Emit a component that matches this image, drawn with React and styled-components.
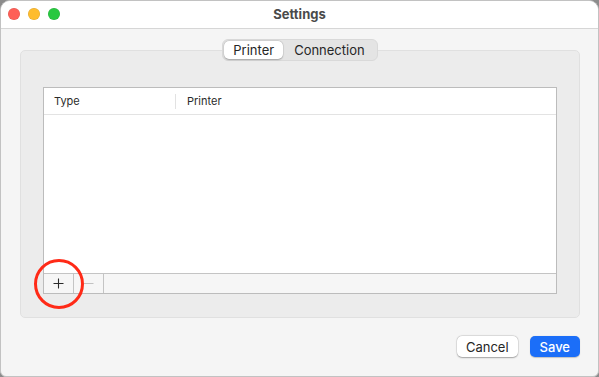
import React from "react";
import styled, { createGlobalStyle } from "styled-components";

const GlobalStyle = createGlobalStyle`
  * { box-sizing: border-box; }
  html, body {
    margin: 0;
    padding: 0;
    background: #8c8c8c;
    font-family: Inter, "Liberation Sans", sans-serif;
    -webkit-font-smoothing: antialiased;
  }
`;

const Window = styled.div`
  width: 599px;
  height: 377px;
  background: #f5f5f5;
  border: 1px solid #c2c2c2;
  border-radius: 10px 10px 6px 6px;
  overflow: hidden;
  display: flex;
  flex-direction: column;
  position: relative;
`;

const TitleBar = styled.div`
  height: 28px;
  flex: none;
  background: #ffffff;
  border-bottom: 1px solid #d6d6d6;
  display: flex;
  align-items: center;
  position: relative;
`;

const Lights = styled.div`
  display: flex;
  gap: 8px;
  padding-left: 7px;
  padding-bottom: 1px;
`;

const Light = styled.span`
  width: 12px;
  height: 12px;
  border-radius: 50%;
  background: ${(p) => p.$color};
  box-shadow: inset 0 0 0 0.5px rgba(0, 0, 0, 0.12);
`;

const Title = styled.div`
  position: absolute;
  left: 0;
  right: 0;
  top: 0;
  bottom: 1px;
  display: flex;
  align-items: center;
  justify-content: center;
  font-size: 13px;
  font-weight: 700;
  color: #4a4a4a;
  pointer-events: none;
`;

const Body = styled.div`
  flex: 1;
  display: flex;
  flex-direction: column;
  padding: 21px 18px 19px 19px;
`;

const Group = styled.div`
  height: 268px;
  background: #ececec;
  border: 1px solid #e0e0e0;
  border-radius: 5px;
  display: flex;
  flex-direction: column;
  align-items: center;
  padding: 0 22px;
`;

const Tabs = styled.div`
  margin-top: -12px;
  height: 22px;
  display: flex;
  padding: 1px;
  background: #e4e4e4;
  border: 1px solid #d9d9d9;
  border-radius: 6px;
`;

const Tab = styled.div`
  height: 100%;
  padding: 0 ${(p) => (p.$active ? "9px" : "11px")};
  display: flex;
  align-items: center;
  font-size: 13px;
  color: #262626;
  border-radius: 5px;
  background: ${(p) => (p.$active ? "#ffffff" : "transparent")};
  box-shadow: ${(p) =>
    p.$active ? "0 0.5px 1.5px rgba(0,0,0,0.25), 0 0 0 0.5px rgba(0,0,0,0.08)" : "none"};
`;

const Table = styled.div`
  margin-top: 26px;
  align-self: stretch;
  height: 207px;
  background: #ffffff;
  border: 1px solid #bcbcbc;
  display: flex;
  flex-direction: column;
`;

const Header = styled.div`
  height: 27px;
  flex: none;
  border-bottom: 1px solid #e3e3e3;
  display: flex;
  align-items: center;
`;

const HeaderCell = styled.div`
  width: ${(p) => p.$width || "auto"};
  flex: ${(p) => (p.$width ? "none" : "1")};
  height: 15px;
  display: flex;
  align-items: center;
  font-size: 11px;
  color: #2b2b2b;
  border-left: ${(p) => (p.$first ? "none" : "1px solid #e2e2e2")};
  padding-left: ${(p) => (p.$first ? "10px" : "11px")};
`;

const Rows = styled.div`
  flex: 1;
`;

const BottomBar = styled.div`
  height: 20px;
  flex: none;
  background: #f6f6f6;
  border-top: 1px solid #c4c4c4;
  display: flex;
`;

const BarButton = styled.div`
  width: 30px;
  height: 100%;
  border-right: 1px solid #c4c4c4;
  display: flex;
  align-items: center;
  justify-content: center;
  color: ${(p) => (p.$disabled ? "#c2c2c2" : "#2a2a2a")};
`;

const Footer = styled.div`
  margin-top: auto;
  display: flex;
  justify-content: flex-end;
  gap: 12px;
`;

const Button = styled.button`
  height: 21px;
  padding: 0 ${(p) => (p.$primary ? "10px" : "9px")};
  font-family: inherit;
  font-size: 13px;
  font-weight: ${(p) => (p.$primary ? 500 : 400)};
  color: ${(p) => (p.$primary ? "#ffffff" : "#262626")};
  background: ${(p) => (p.$primary ? "#1b6ef8" : "#ffffff")};
  border: none;
  border-radius: 5px;
  box-shadow: ${(p) =>
    p.$primary
      ? "0 0.5px 1px rgba(0,0,0,0.2)"
      : "0 0.5px 1.5px rgba(0,0,0,0.3), 0 0 0 0.5px rgba(0,0,0,0.1)"};
`;

const Marker = styled.div`
  position: absolute;
  left: 33px;
  top: 258px;
  width: 50px;
  height: 50px;
  border: 3px solid #ff2a17;
  border-radius: 50%;
  pointer-events: none;
`;

const Plus = () => (
  <svg width="11" height="11" viewBox="0 0 11 11">
    <path d="M5.5 0.5v10M0.5 5.5h10" stroke="currentColor" strokeWidth="1.1" />
  </svg>
);

const Minus = () => (
  <svg width="11" height="11" viewBox="0 0 11 11">
    <path d="M0.5 5.5h10" stroke="currentColor" strokeWidth="1" />
  </svg>
);

export default function App() {
  return (
    <>
      <GlobalStyle />
      <Window>
        <TitleBar>
          <Lights>
            <Light $color="#fe5f57" />
            <Light $color="#febc2e" />
            <Light $color="#28c840" />
          </Lights>
          <Title>Settings</Title>
        </TitleBar>
        <Body>
          <Group>
            <Tabs>
              <Tab $active>Printer</Tab>
              <Tab>Connection</Tab>
            </Tabs>
            <Table>
              <Header>
                <HeaderCell $first $width="131px">Type</HeaderCell>
                <HeaderCell>Printer</HeaderCell>
              </Header>
              <Rows />
              <BottomBar>
                <BarButton>
                  <Plus />
                </BarButton>
                <BarButton $disabled>
                  <Minus />
                </BarButton>
              </BottomBar>
            </Table>
          </Group>
          <Footer>
            <Button>Cancel</Button>
            <Button $primary>Save</Button>
          </Footer>
        </Body>
        <Marker />
      </Window>
    </>
  );
}
